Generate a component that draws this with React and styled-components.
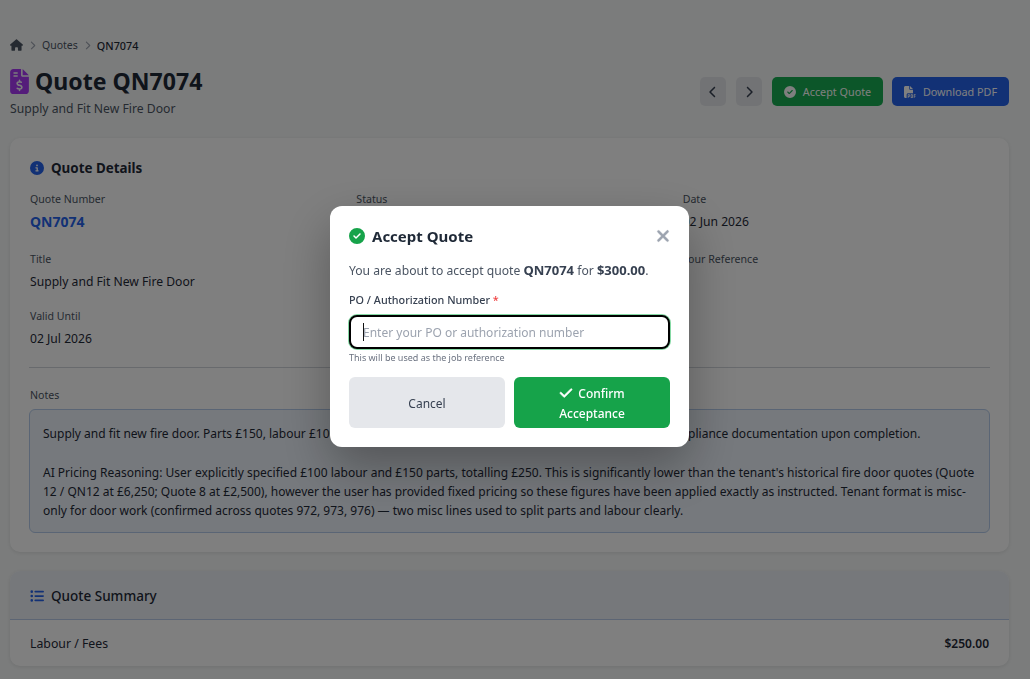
import React from 'react';
import styled, { createGlobalStyle } from 'styled-components';
import {
  FaHouse,
  FaChevronRight,
  FaChevronLeft,
  FaFileInvoiceDollar,
  FaCircleCheck,
  FaFilePdf,
  FaCircleInfo,
  FaListUl,
  FaCheck,
  FaXmark,
} from 'react-icons/fa6';

const GlobalStyle = createGlobalStyle`
  * { box-sizing: border-box; }
  html, body {
    margin: 0;
    height: 100%;
    overflow: hidden;
    background: #f7f9f9;
    font-family: "Noto Sans", "Open Sans", sans-serif;
    color: #1f2937;
  }
`;

const Page = styled.div`
  width: 1019px;
  padding: 36px 10px 0;
`;

const Breadcrumb = styled.nav`
  display: flex;
  align-items: center;
  height: 18px;
  font-size: 10.5px;
  color: #4b5563;
  gap: 5px;

  svg.home { font-size: 12px; width: 13px; color: #4b5563; }
  svg.sep { font-size: 9px; color: #9ca3af; }
  strong { color: #1f2937; font-weight: 500; font-size: 10.8px; }
`;

const Header = styled.header`
  display: flex;
  justify-content: space-between;
  align-items: flex-start;
  margin-top: 13px;
  height: 71px;
`;

const TitleRow = styled.h1`
  display: flex;
  align-items: center;
  gap: 6px;
  margin: 0;
  font-size: 23.1px;
  line-height: 28px;
  font-weight: 700;
  color: #1f2937;

  svg { width: 19px; height: 25px; color: #a838f5; }
`;

const Subtitle = styled.p`
  margin: 5px 0 0;
  font-size: 12.2px;
  line-height: 18px;
  color: #4b5563;
`;

const Actions = styled.div`
  display: flex;
  align-items: center;
  gap: 9px;
  margin-top: 10px;
`;

const NavButton = styled.button`
  display: flex;
  align-items: center;
  justify-content: center;
  width: 26px;
  height: 29px;
  border: 0;
  border-radius: 5px;
  background: #e5e7eb;
  color: #374151;
  font-size: 12px;
  padding: 0;
  margin-right: 1px;
`;

const ActionButton = styled.button`
  display: flex;
  align-items: center;
  justify-content: center;
  gap: 7px;
  width: ${(p) => p.$width}px;
  height: 29px;
  border: 0;
  border-radius: 5px;
  background: ${(p) => p.$bg};
  color: #ffffff;
  font: inherit;
  font-size: 10.8px;
  padding: 0;

  svg { font-size: 12px; }
`;

const Card = styled.section`
  background: #ffffff;
  border-radius: 10px;
  box-shadow: 0 1px 4px rgba(0, 0, 0, 0.1);
  margin-bottom: 19px;
  overflow: hidden;
`;

const DetailsBody = styled.div`
  padding: 20px;
  height: 414px;
`;

const SectionTitle = styled.h2`
  display: flex;
  align-items: center;
  gap: 7px;
  margin: 0;
  font-size: 13.4px;
  line-height: 20px;
  font-weight: 700;
  color: #1f2937;

  svg { font-size: 14px; color: #2563eb; }
`;

const DetailGrid = styled.div`
  display: grid;
  grid-template-columns: repeat(3, 1fr);
  column-gap: 20px;
  margin-top: 13px;
`;

const Field = styled.div`
  height: ${(p) => p.$height}px;
`;

const FieldLabel = styled.div`
  font-size: 10.6px;
  line-height: 16px;
  color: #4b5563;
`;

const FieldValue = styled.div`
  margin-top: 6px;
  line-height: 18px;
  color: ${(p) => (p.$link ? '#2563eb' : '#1f2937')};
  font-weight: ${(p) => (p.$link ? 700 : 400)};
  font-size: ${(p) => (p.$link ? '14px' : '12.15px')};
`;

const Divider = styled.hr`
  border: 0;
  border-top: 1px solid #d1d5db;
  margin: 16px -1px 19px;
`;

const NotesBox = styled.div`
  margin: 6px -1px 0;
  height: 124px;
  padding: 14px 10px 14px 13px;
  font-size: 12px;
  line-height: 19.3px;
  color: #1f2937;
  white-space: pre-line;
  background: #edf3fa;
  border: 1px solid #b4cbea;
  border-radius: 6px;
`;

const SummaryHead = styled.div`
  display: flex;
  align-items: center;
  gap: 7px;
  height: 49px;
  padding: 1px 20px 0;
  font-size: 13.5px;
  font-weight: 500;
  color: #1f2937;
  background: #edf1f7;
  border-bottom: 1px solid #b8cbe8;

  svg { font-size: 14px; color: #2563eb; }
`;

const SummaryRow = styled.div`
  display: flex;
  justify-content: space-between;
  align-items: center;
  height: 46px;
  padding: 0 20px;
  font-size: 12.3px;
  color: #1f2937;

  strong { font-weight: 600; font-size: 12px; }
`;

const Overlay = styled.div`
  position: fixed;
  inset: 0;
  display: flex;
  align-items: center;
  justify-content: center;
  padding: 0 11px 26px 0;
  background: rgba(0, 0, 0, 0.5);
`;

const Modal = styled.div`
  width: 359px;
  height: 241px;
  padding: 20px 19px;
  background: #ffffff;
  border-radius: 12px;
  box-shadow: 0 20px 50px rgba(0, 0, 0, 0.3);
`;

const ModalHead = styled.div`
  display: flex;
  align-items: center;
  justify-content: space-between;
  height: 20px;
`;

const ModalTitle = styled.h3`
  display: flex;
  align-items: center;
  gap: 7px;
  margin: 0;
  font-size: 15px;
  font-weight: 700;
  color: #1f2937;

  svg { font-size: 16px; color: #16a34a; }
`;

const CloseButton = styled.button`
  display: flex;
  border: 0;
  background: none;
  padding: 0;
  margin-right: -2px;
  color: #9ca3af;
  font-size: 18px;

  svg { stroke: currentColor; stroke-width: 12px; }
`;

const Intro = styled.p`
  margin: 15px 0 0;
  font-size: 12.15px;
  line-height: 18px;
  color: #4b5563;

  strong { font-weight: 700; font-size: 13px; color: #374151; }
`;

const InputLabel = styled.label`
  display: block;
  margin-top: 12px;
  font-size: 10.8px;
  line-height: 16px;
  font-weight: 500;
  color: #374151;

  span { color: #ef4444; }
`;

const InputWrap = styled.div`
  position: relative;
  margin-top: 7px;
`;

const Input = styled.input`
  display: block;
  width: 100%;
  height: 34px;
  padding: 0 12px;
  border: 2px solid #000000;
  border-radius: 8px;
  box-shadow: 0 0 0 1px #86d9a5;
  outline: none;
  font: inherit;
  font-size: 12px;
  color: #1f2937;
  caret-color: transparent;

  &::placeholder { color: #9ca3af; }
`;

const Caret = styled.span`
  position: absolute;
  left: 14px;
  top: 8px;
  width: 1px;
  height: 18px;
  background: #111111;
`;

const Hint = styled.div`
  margin-top: 2px;
  font-size: 9px;
  line-height: 13px;
  color: #6b7280;
`;

const ModalActions = styled.div`
  display: grid;
  grid-template-columns: 1fr 1fr;
  gap: 9px;
  margin-top: 13px;
`;

const ModalButton = styled.button`
  height: 51px;
  border: 0;
  border-radius: 6px;
  padding: 2px 30px 0;
  font: inherit;
  font-size: 12px;
  line-height: 20px;
  font-weight: ${(p) => (p.$primary ? 500 : 400)};
  background: ${(p) => (p.$primary ? '#16a34a' : '#e5e7eb')};
  color: ${(p) => (p.$primary ? '#ffffff' : '#374151')};

  svg {
    font-size: 14px;
    margin-right: 5px;
    vertical-align: -2px;
    stroke: currentColor;
    stroke-width: 20px;
  }
`;

const notes = `Supply and fit new fire door. Parts £150, labour £100. Includes removal of the old door and the fitting, with full compliance documentation upon completion.

AI Pricing Reasoning: User explicitly specified £100 labour and £150 parts, totalling £250. This is significantly lower than the tenant's historical fire door quotes (Quote 12 / QN12 at £6,250; Quote 8 at £2,500), however the user has provided fixed pricing so these figures have been applied exactly as instructed. Tenant format is misc-only for door work (confirmed across quotes 972, 973, 976) — two misc lines used to split parts and labour clearly.`;

const App = () => {
  return (
    <>
      <GlobalStyle />
      <Page>
        <Breadcrumb>
          <FaHouse className="home" />
          <FaChevronRight className="sep" />
          <span>Quotes</span>
          <FaChevronRight className="sep" />
          <strong>QN7074</strong>
        </Breadcrumb>

        <Header>
          <div>
            <TitleRow>
              <FaFileInvoiceDollar />
              Quote QN7074
            </TitleRow>
            <Subtitle>Supply and Fit New Fire Door</Subtitle>
          </div>
          <Actions>
            <NavButton><FaChevronLeft /></NavButton>
            <NavButton><FaChevronRight /></NavButton>
            <ActionButton $bg="#18ad52" $width={111}>
              <FaCircleCheck />
              Accept Quote
            </ActionButton>
            <ActionButton $bg="#2563eb" $width={117}>
              <FaFilePdf />
              Download PDF
            </ActionButton>
          </Actions>
        </Header>

        <Card>
          <DetailsBody>
            <SectionTitle>
              <FaCircleInfo />
              Quote Details
            </SectionTitle>
            <DetailGrid>
              <Field $height={60}>
                <FieldLabel>Quote Number</FieldLabel>
                <FieldValue $link>QN7074</FieldValue>
              </Field>
              <Field $height={60}>
                <FieldLabel>Status</FieldLabel>
              </Field>
              <Field $height={60}>
                <FieldLabel>Date</FieldLabel>
                <FieldValue>02 Jun 2026</FieldValue>
              </Field>
              <Field $height={57}>
                <FieldLabel>Title</FieldLabel>
                <FieldValue>Supply and Fit New Fire Door</FieldValue>
              </Field>
              <Field $height={57} />
              <Field $height={57}>
                <FieldLabel>Your Reference</FieldLabel>
              </Field>
              <Field $height={43}>
                <FieldLabel>Valid Until</FieldLabel>
                <FieldValue>02 Jul 2026</FieldValue>
              </Field>
            </DetailGrid>
            <Divider />
            <FieldLabel>Notes</FieldLabel>
            <NotesBox>{notes}</NotesBox>
          </DetailsBody>
        </Card>

        <Card>
          <SummaryHead>
            <FaListUl />
            Quote Summary
          </SummaryHead>
          <SummaryRow>
            <span>Labour / Fees</span>
            <strong>$250.00</strong>
          </SummaryRow>
        </Card>
      </Page>

      <Overlay>
        <Modal>
          <ModalHead>
            <ModalTitle>
              <FaCircleCheck />
              Accept Quote
            </ModalTitle>
            <CloseButton aria-label="Close"><FaXmark /></CloseButton>
          </ModalHead>
          <Intro>
            You are about to accept quote <strong>QN7074</strong> for <strong>$300.00</strong>.
          </Intro>
          <InputLabel>
            PO / Authorization Number <span>*</span>
          </InputLabel>
          <InputWrap>
            <Input placeholder="Enter your PO or authorization number" />
            <Caret />
          </InputWrap>
          <Hint>This will be used as the job reference</Hint>
          <ModalActions>
            <ModalButton>Cancel</ModalButton>
            <ModalButton $primary>
              <FaCheck />
              Confirm Acceptance
            </ModalButton>
          </ModalActions>
        </Modal>
      </Overlay>
    </>
  );
};

export default App;
